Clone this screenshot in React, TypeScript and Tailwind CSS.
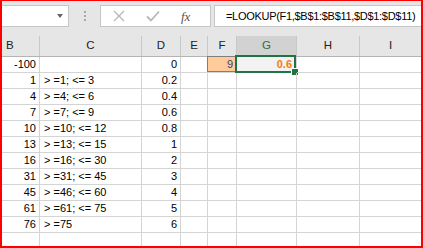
import React from 'react';

const font = { fontFamily: '"Liberation Sans", Arial, sans-serif' };

const columns = [
  { name: 'B', w: 'w-[38px]' },
  { name: 'C', w: 'w-[102px]' },
  { name: 'D', w: 'w-[39px]' },
  { name: 'E', w: 'w-[27px]' },
  { name: 'F', w: 'w-[29px]' },
  { name: 'G', w: 'w-[60px]' },
  { name: 'H', w: 'w-[63px]' },
  { name: 'I', w: 'flex-1' },
];

const rows: [string, string, string][] = [
  ['-100', '', '0'],
  ['1', '> =1; <= 3', '0.2'],
  ['4', '> =4; <= 6', '0.4'],
  ['7', '> =7; <= 9', '0.6'],
  ['10', '> =10; <= 12', '0.8'],
  ['13', '> =13; <= 15', '1'],
  ['16', '> =16; <= 30', '2'],
  ['31', '> =31; <= 45', '3'],
  ['45', '> =46; <= 60', '4'],
  ['61', '> =61; <= 75', '5'],
  ['76', '> =75', '6'],
];

const FormulaBar = () => (
  <div className="h-[35px] bg-[#e6e6e6] flex items-start pt-[4px]">
    <div className="w-[67px] h-[22px] bg-white border border-l-0 border-[#c6c6c6] flex items-center justify-end pr-[5px]">
      <div className="w-0 h-0 border-l-[3px] border-r-[3px] border-t-[4px] border-l-transparent border-r-transparent border-t-[#666]" />
    </div>
    <div className="w-[31px] h-[22px] flex flex-col items-center justify-center gap-[2px]">
      <div className="w-[2px] h-[2px] bg-[#a6a6a6]" />
      <div className="w-[2px] h-[2px] bg-[#a6a6a6]" />
      <div className="w-[2px] h-[2px] bg-[#a6a6a6]" />
    </div>
    <div className="w-[111px] h-[22px] bg-white border border-[#c6c6c6] flex items-center">
      <svg width="12" height="12" viewBox="0 0 12 12" className="ml-[12px]">
        <path d="M1 1 L11 11 M11 1 L1 11" stroke="#b8b8b8" strokeWidth="1.4" fill="none" />
      </svg>
      <svg width="14" height="12" viewBox="0 0 14 12" className="ml-[21px]">
        <path d="M1 6.5 L5 10.5 L13 1.5" stroke="#b8b8b8" strokeWidth="1.8" fill="none" />
      </svg>
      <span
        className="ml-[21px] text-[13px] italic text-[#555] leading-none"
        style={{ fontFamily: '"Liberation Serif", "Times New Roman", serif' }}
      >
        fx
      </span>
    </div>
    <div className="ml-[3px] flex-1 h-[22px] bg-white border border-r-0 border-[#c6c6c6] flex items-center pl-[11px]">
      <span className="text-[11px] text-black tracking-[-0.3px]">=LOOKUP(F1,$B$1:$B$11,$D$1:$D$11)</span>
    </div>
  </div>
);

const Header = () => (
  <div className="flex h-[21px] bg-[#e6e6e6] border-b border-[#b4b4b4]">
    {columns.map((c, i) => {
      const selected = c.name === 'G';
      const align = c.name === 'B' ? 'justify-start pl-[4px]' : 'justify-center';
      return (
        <div
          key={c.name}
          className={`${c.w} h-full flex items-center ${align} text-[11.5px] ${
            i < columns.length - 1 ? 'border-r border-[#c8c8c8]' : ''
          } ${selected ? 'bg-[#d2d2d2] text-[#217346]' : 'text-[#222]'}`}
        >
          {c.name}
        </div>
      );
    })}
  </div>
);

const Cell = ({
  w,
  last,
  children,
  className = '',
  color = 'text-black',
  h = 'h-[16px]',
}: {
  w: string;
  last?: boolean;
  children?: React.ReactNode;
  className?: string;
  color?: string;
  h?: string;
}) => (
  <div
    className={`${w} ${h} relative border-b border-[#d4d4d4] ${last ? '' : 'border-r'} flex items-center text-[11px] leading-[15px] ${color} ${className}`}
  >
    {children}
  </div>
);

const App = () => {
  return (
    <div
      className="w-[423px] h-[248px] border-x-2 border-t border-b-2 border-[#ff0000] bg-white overflow-hidden"
      style={font}
    >
      <FormulaBar />
      <Header />
      {rows.map((r, ri) => (
        <div key={ri} className="flex">
          <Cell w="w-[38px]" className="justify-end pr-[3px]">{r[0]}</Cell>
          <Cell w="w-[102px]" className="pl-[4px] whitespace-pre">{r[1]}</Cell>
          <Cell w="w-[39px]" className="justify-end pr-[3px]">{r[2]}</Cell>
          <Cell w="w-[27px]" />
          {ri === 0 ? (
            <Cell w="w-[29px]" className="justify-end pr-[3px] bg-[#ffcc99]" color="text-[#3f3f76]">
              <span className="absolute left-[-1px] top-[-1px] right-0 bottom-0 border border-[#7f7f7f] pointer-events-none" />
              <span className="relative">9</span>
            </Cell>
          ) : (
            <Cell w="w-[29px]" />
          )}
          {ri === 0 ? (
            <Cell w="w-[60px]" className="justify-end pr-[4px] bg-[#f2f2f2] font-bold" color="text-[#fa7d00]">
              <span className="relative">0.6</span>
              <span className="absolute left-[-2px] top-[-2px] right-[0px] bottom-[-1px] border-2 border-[#217346] pointer-events-none" />
              <span className="absolute right-[-3px] bottom-[-4px] w-[6px] h-[6px] bg-[#217346] border border-white box-content pointer-events-none" />
            </Cell>
          ) : (
            <Cell w="w-[60px]" />
          )}
          <Cell w="w-[63px]" />
          <Cell w="flex-1" last />
        </div>
      ))}
      <div className="flex">
        {columns.map((c, i) => (
          <Cell key={c.name} w={c.w} last={i === columns.length - 1} h="h-[13px]" className="border-b-0" />
        ))}
      </div>
    </div>
  );
};

export default App;
